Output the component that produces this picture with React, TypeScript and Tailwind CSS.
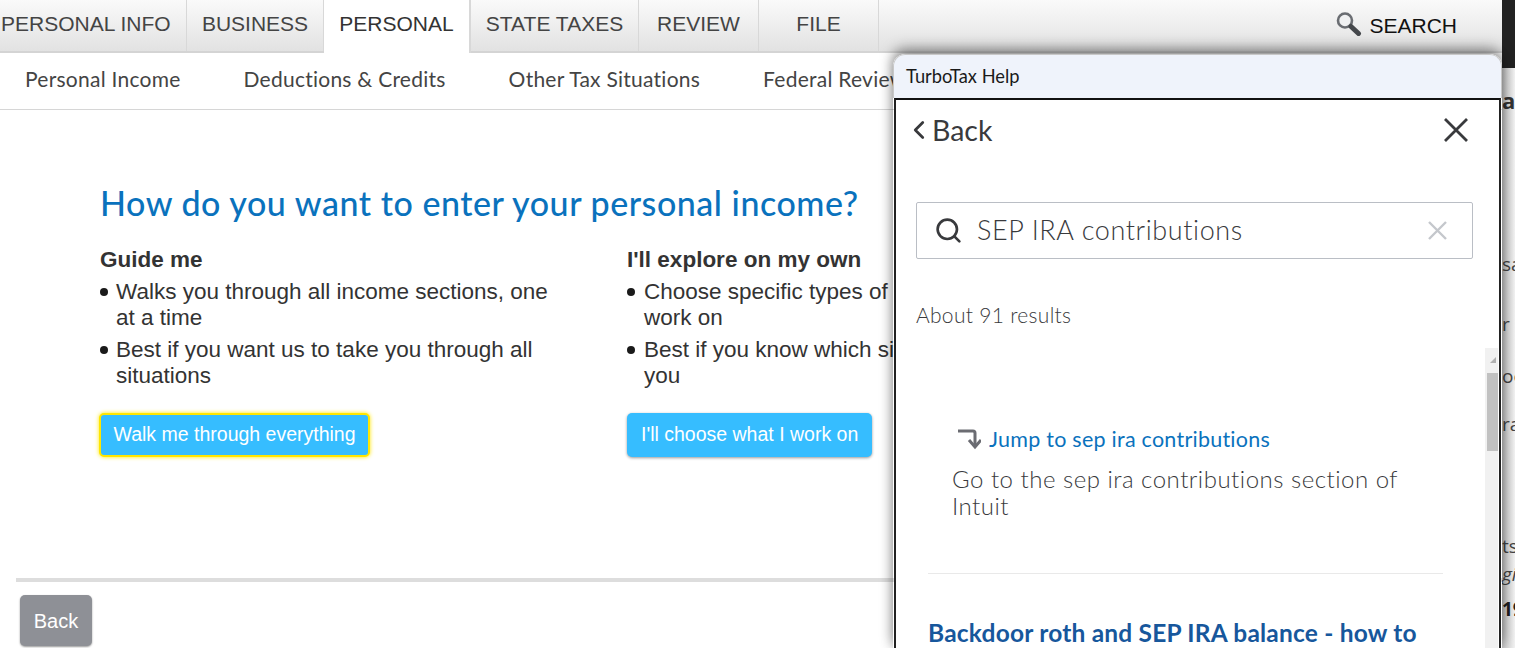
import { ChevronLeft, Search } from "lucide-react";

const tabs = [
  { label: "PERSONAL INFO", w: "w-[187px]", pad: "pl-[1px] justify-start" },
  { label: "BUSINESS", w: "w-[137px]", pad: "justify-center" },
  { label: "PERSONAL", w: "w-[147px]", pad: "justify-center", active: true },
  { label: "STATE TAXES", w: "w-[168px]", pad: "justify-center" },
  { label: "REVIEW", w: "w-[120px]", pad: "justify-center" },
  { label: "FILE", w: "w-[120px]", pad: "justify-center" },
];

const subTabs = ["Personal Income", "Deductions & Credits", "Other Tax Situations", "Federal Review"];

function Bullet({ children, width }: { children: React.ReactNode; width: string }) {
  return (
    <li className="flex">
      <span className="mt-[9px] mr-[8px] h-[8px] w-[8px] shrink-0 rounded-full bg-[#1a1a1a]" />
      <span className={width}>{children}</span>
    </li>
  );
}

function Choice({ title, width, textWidth, items, button, glow }: { title: string; width: string; textWidth: string; items: string[]; button: string; glow?: boolean }) {
  return (
    <div className={`${width} shrink-0`}>
      <div className="text-[22.5px] leading-[26px] font-bold text-[#333]">{title}</div>
      <ul className="mt-[6px] flex flex-col gap-[6px] text-[22.5px] leading-[26px] text-[#333]">
        {items.map((t) => (
          <Bullet key={t} width={textWidth}>{t}</Bullet>
        ))}
      </ul>
      <button
        className={`mt-[24px] h-[44px] rounded-[5px] bg-[#36bdff] text-[19.5px] whitespace-nowrap text-white ${glow ? "-ml-[1px] border-2 border-[#ffe600] px-[12.5px] shadow-[0_0_4px_#ffe600]" : "px-[14px] shadow-[0_1px_3px_rgba(0,0,0,0.4)]"}`}
      >
        {button}
      </button>
    </div>
  );
}

export default function App() {
  return (
    <div className="relative flex h-[648px] w-[1515px] overflow-hidden bg-white font-['Liberation_Sans',sans-serif]">
      <div className="w-[1502px] shrink-0">
        {/* top tabs */}
        <div className="flex h-[53px] items-stretch border-b-2 border-[#d4d4d4] bg-gradient-to-b from-[#fafafa] to-[#e2e2e2]">
          {tabs.map((t) => (
            <div
              key={t.label}
              className={`flex ${t.w} ${t.pad} items-center border-r border-[#d8d8d8] text-[21px] ${t.active ? "-mb-[2px] border-r-2 bg-white pb-[6px] text-[#333]" : "pb-[4px] text-[#444]"}`}
            >
              {t.label}
            </div>
          ))}
          <div className="ml-auto flex items-center gap-[7px] pr-[45px] text-[21px] text-[#111]">
            <svg width="26" height="24" viewBox="0 0 26 24" className="-mt-[4px]">
              <circle cx="9" cy="8.5" r="7" fill="#f0f1f2" stroke="#6a6d72" strokeWidth="2.6" />
              <path d="M15 14.5 L22.5 21.5" stroke="#45484c" strokeWidth="5" strokeLinecap="round" />
            </svg>
            SEARCH
          </div>
        </div>
        {/* sub nav */}
        <div className="flex h-[57px] items-center gap-[63px] border-b border-[#d6d6d6] pb-[5px] pl-[25px] font-['Lato',sans-serif] text-[21px] tracking-[0.25px] whitespace-nowrap text-[#444]">
          {subTabs.map((s) => (
            <span key={s}>{s}</span>
          ))}
        </div>
        {/* main question */}
        <div className="flex h-[472px] flex-col pl-[16px]">
          <div className="pl-[84px]">
            <h1 className="mt-[71px] font-['Lato',sans-serif] text-[34px] leading-[44px] font-medium tracking-[0.53px] whitespace-nowrap text-[#0a72bd]">
              How do you want to enter your personal income?
            </h1>
            <div className="mt-[22px] flex">
              <Choice
                title="Guide me"
                width="w-[527px]"
                textWidth="w-[440px]"
                glow
                button="Walk me through everything"
                items={["Walks you through all income sections, one at a time", "Best if you want us to take you through all situations"]}
              />
              <Choice
                title="I'll explore on my own"
                width="w-[500px]"
                textWidth="ml-[1px] w-[455px]"
                button="I'll choose what I work on"
                items={["Choose specific types of income you want to work on", "Best if you know which situations apply to you"]}
              />
            </div>
          </div>
          <div className="mt-auto h-[4px] bg-[#dddddd]" />
        </div>
        <div className="pt-[13px] pl-[20px]">
          <button className="h-[51px] w-[72px] rounded-[5px] bg-[#8e9096] text-[20px] text-white shadow-[0_1px_2px_rgba(0,0,0,0.4)]">Back</button>
        </div>
      </div>

      {/* page behind, cut off at the right edge */}
      <div className="flex w-[13px] shrink-0 flex-col overflow-hidden bg-gradient-to-r from-[#c9c9c9] to-[#f2f2f2] font-['Open_Sans',sans-serif] text-[19px] whitespace-nowrap text-[#444]">
        <div className="h-[68px] shrink-0 bg-[#222]" />
        <div className="mt-[16px] h-[26px] text-[22px] font-bold text-[#333]">a</div>
        <div className="mt-[140px] h-[26px]">sa</div>
        <div className="mt-[34px] h-[26px]">r l</div>
        <div className="mt-[26px] h-[26px]">oo</div>
        <div className="mt-[22px] h-[26px]">ra</div>
        <div className="mt-[96px] h-[26px]">ts</div>
        <div className="mt-[2px] h-[26px] italic">gi</div>
        <div className="mt-[9px] h-[26px] font-bold text-[#222]">19</div>
      </div>

      {/* help panel floats over the page */}
      <div className="absolute top-[54px] left-[893px] flex h-[594px] w-[609px] flex-col overflow-hidden rounded-t-[12px] bg-transparent shadow-[0_-6px_14px_rgba(0,0,0,0.35),0_0_12px_rgba(0,0,0,0.25)]">
        <div className="flex h-[44px] shrink-0 items-center rounded-t-[12px] border-x border-t border-[#c8c8c8] border-b-0 bg-[#eff3fb] pl-[12px] font-['Lato',sans-serif] text-[18.3px] text-[#1a1a1a]">
          TurboTax Help
        </div>
        <div className="relative mx-[1px] flex-1 border-x-2 border-t-2 border-x-[#222] border-t-[#111] bg-white font-['Lato',sans-serif]">
          <div className="flex h-[59px] items-center justify-between pr-[31px] pl-[8px] text-[#393a3d]">
            <div className="flex items-center text-[28.5px] leading-[32px]">
              <ChevronLeft size={30} strokeWidth={2.2} className="-mr-[2px]" />
              Back
            </div>
            <svg width="24" height="24" viewBox="0 0 24 24" stroke="#393a3d" strokeWidth="2.8">
              <path d="M1 1 L23 23 M23 1 L1 23" />
            </svg>
          </div>
          <div className="mt-[43px] ml-[20px] flex h-[57px] w-[557px] items-center rounded-[2px] border border-[#babec5] pr-[25px] pl-[17px] text-[#393a3d]">
            <Search size={29} strokeWidth={2.2} />
            <span className="ml-[14px] text-[27px] font-light tracking-[0.6px]">SEP IRA contributions</span>
            <svg width="19" height="19" viewBox="0 0 19 19" stroke="#c4c7cc" strokeWidth="2.4" className="ml-auto">
              <path d="M1 1 L18 18 M18 1 L1 18" />
            </svg>
          </div>
          <div className="mt-[42px] ml-[20px] text-[21px] leading-[28px] tracking-[0.3px] font-light text-[#393a3d]">About 91 results</div>
          <div className="mt-[96px] ml-[61px] flex items-center gap-[8px] text-[21.5px] leading-[28px] tracking-[0.25px] text-[#0a72bd]">
            <svg width="24" height="22" viewBox="0 0 24 22" fill="none" className="-mt-[1px]">
              <path d="M1 3 H16 Q18 3 18 5 V17" stroke="#6b6c72" strokeWidth="3" />
              <path d="M12 12 L18 19 L24 12" stroke="#6b6c72" strokeWidth="3" />
            </svg>
            Jump to sep ira contributions
          </div>
          <p className="mt-[12px] ml-[56px] w-[470px] text-[24px] leading-[27px] tracking-[0.5px] font-light text-[#393a3d]">
            Go to the sep ira contributions section of Intuit
          </p>
          <div className="mt-[54px] ml-[32px] h-px w-[515px] bg-[#e9e9e9]" />
          <div className="mt-[44px] ml-[32px] text-[24.5px] leading-[30px] tracking-[0.2px] font-bold whitespace-nowrap text-[#17579c]">
            Backdoor roth and SEP IRA balance - how to
          </div>
          {/* scrollbar */}
          <div className="absolute top-[248px] right-[1px] bottom-0 flex w-[13px] flex-col items-center bg-[#f1f1f1]">
            <div className="mt-[9px] ml-[2px] h-0 w-0 border-b-[6px] border-l-[6px] border-b-[#b0b0b0] border-l-transparent" />
            <div className="mt-[10px] ml-[1px] h-[78px] w-[11px] bg-[#c1c1c1]" />
          </div>
        </div>
      </div>
    </div>
  );
}
